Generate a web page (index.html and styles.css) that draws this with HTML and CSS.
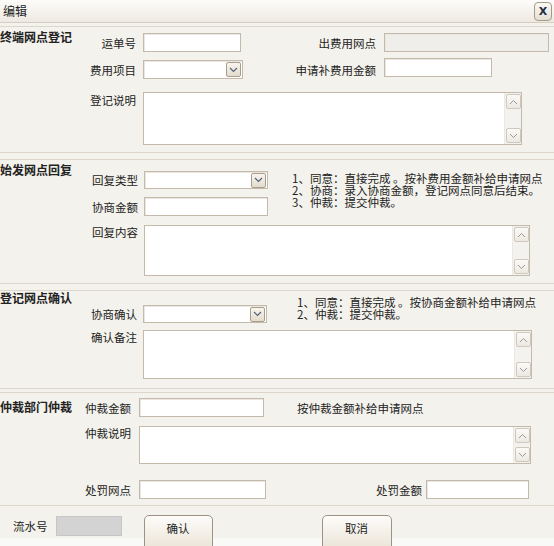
FILE: index.html
```html
<!DOCTYPE html>
<html lang="zh-CN">
<head>
<meta charset="utf-8">
<title>编辑</title>
<link rel="stylesheet" href="styles.css">
</head>
<body>
<div class="dlg">
  <div class="titlebar">
    <span class="ttl">编辑</span>
    <span class="close">X</span>
  </div>

  <section class="sec s1">
    <div class="sec-title">终端网点登记</div>
    <div class="sec-body">
      <div class="row">
        <span class="lbl l1">运单号</span><span class="inp w98"></span>
        <span class="lbl l1r">出费用网点</span><span class="inp dis w165"></span>
      </div>
      <div class="row mt8">
        <span class="lbl l1">费用项目</span>
        <span class="inp sel w100"><span class="dd"><svg width="9" height="6" viewBox="0 0 9 6"><path d="M1 1 L4.5 4.5 L8 1" fill="none" stroke="#56627c" stroke-width="1.2"/></svg></span></span>
        <span class="lbl l1r2">申请补费用金额</span><span class="inp w108 up"></span>
      </div>
      <div class="row top mt13">
        <span class="lbl l1 pt1">登记说明</span>
        <span class="ta w379 h53"><span class="sb"><span class="sbb"><svg width="9" height="6" viewBox="0 0 9 6"><path d="M1 5 L4.5 1.5 L8 5" fill="none" stroke="#9a9a9a"/></svg></span><span class="sbb"><svg width="9" height="6" viewBox="0 0 9 6"><path d="M1 1 L4.5 4.5 L8 1" fill="none" stroke="#9a9a9a"/></svg></span></span></span>
      </div>
    </div>
  </section>

  <section class="sec s2">
    <div class="sec-title">始发网点回复</div>
    <div class="sec-body">
      <div class="toprow">
        <div class="fields">
          <div class="row">
            <span class="lbl l2">回复类型</span>
            <span class="inp sel w124 h18"><span class="dd"><svg width="9" height="6" viewBox="0 0 9 6"><path d="M1 1 L4.5 4.5 L8 1" fill="none" stroke="#56627c" stroke-width="1.2"/></svg></span></span>
          </div>
          <div class="row mt8">
            <span class="lbl l2">协商金额</span><span class="inp w124"></span>
          </div>
        </div>
        <div class="notes n2">
          <div>1、同意：直接完成 。按补费用金额补给申请网点</div>
          <div>2、协商：录入协商金额，登记网点同意后结束。</div>
          <div>3、仲裁：提交仲裁。</div>
        </div>
      </div>
      <div class="row top mt9">
        <span class="lbl l2">回复内容</span>
        <span class="ta w386 h51"><span class="sb"><span class="sbb"><svg width="9" height="6" viewBox="0 0 9 6"><path d="M1 5 L4.5 1.5 L8 5" fill="none" stroke="#9a9a9a"/></svg></span><span class="sbb"><svg width="9" height="6" viewBox="0 0 9 6"><path d="M1 1 L4.5 4.5 L8 1" fill="none" stroke="#9a9a9a"/></svg></span></span></span>
      </div>
    </div>
  </section>

  <section class="sec s3">
    <div class="sec-title">登记网点确认</div>
    <div class="sec-body">
      <div class="toprow">
        <div class="row">
          <span class="lbl l3">协商确认</span>
          <span class="inp sel w124 h18"><span class="dd"><svg width="9" height="6" viewBox="0 0 9 6"><path d="M1 1 L4.5 4.5 L8 1" fill="none" stroke="#56627c" stroke-width="1.2"/></svg></span></span>
        </div>
        <div class="notes n3">
          <div>1、同意：直接完成 。按协商金额补给申请网点</div>
          <div>2、仲裁：提交仲裁。</div>
        </div>
      </div>
      <div class="row top mt7">
        <span class="lbl l3">确认备注</span>
        <span class="ta w389 h49"><span class="sb"><span class="sbb"><svg width="9" height="6" viewBox="0 0 9 6"><path d="M1 5 L4.5 1.5 L8 5" fill="none" stroke="#9a9a9a"/></svg></span><span class="sbb"><svg width="9" height="6" viewBox="0 0 9 6"><path d="M1 1 L4.5 4.5 L8 1" fill="none" stroke="#9a9a9a"/></svg></span></span></span>
      </div>
    </div>
  </section>

  <section class="sec s4">
    <div class="sec-title">仲裁部门仲裁</div>
    <div class="sec-body">
      <div class="row">
        <span class="lbl l4">仲裁金额</span><span class="inp w125"></span>
        <span class="hint">按仲裁金额补给申请网点</span>
      </div>
      <div class="row top mt9">
        <span class="lbl l4">仲裁说明</span>
        <span class="ta w392 h38"><span class="sb"><span class="sbb"><svg width="9" height="6" viewBox="0 0 9 6"><path d="M1 5 L4.5 1.5 L8 5" fill="none" stroke="#9a9a9a"/></svg></span><span class="sbb"><svg width="9" height="6" viewBox="0 0 9 6"><path d="M1 1 L4.5 4.5 L8 1" fill="none" stroke="#9a9a9a"/></svg></span></span></span>
      </div>
      <div class="row mt16">
        <span class="lbl l4">处罚网点</span><span class="inp w127"></span>
        <span class="lbl l4r">处罚金额</span><span class="inp w103"></span>
      </div>
    </div>
  </section>

  <div class="footer">
    <span class="flbl">流水号</span>
    <span class="serial"></span>
    <span class="btn b1">确认</span>
    <span class="btn b2">取消</span>
  </div>
</div>
</body>
</html>
```

FILE: styles.css
```css
* { box-sizing: border-box; }
html, body { margin: 0; padding: 0; }
body {
  width: 554px;
  height: 546px;
  overflow: hidden;
  background: #f9f9f8;
  font-family: "Noto Sans CJK SC", "Noto Sans", sans-serif;
  font-size: 11.5px;
  color: #222;
}
.dlg {
  background: #f4f2ec;
  height: 538px;
}
.titlebar {
  height: 23px;
  display: flex;
  align-items: center;
  justify-content: space-between;
  padding: 0 2px 0 3px;
  background: linear-gradient(#fdfcfa, #eeeae2);
  border-bottom: 1px solid #d5cec2;
}
.ttl { font-size: 12px; line-height: 14px; }
.close {
  width: 18px;
  height: 19px;
  border: 1px solid #a39a8a;
  border-radius: 4px;
  background: linear-gradient(#fbf9f4, #e6e0d3);
  display: flex;
  align-items: center;
  justify-content: center;
  font-family: "DejaVu Sans", sans-serif;
  font-weight: bold;
  font-size: 11px;
  color: #1f2d4a;
}

.sec {
  display: flex;
  border-top: 1px solid #ddd6ca;
  border-bottom: 1px solid #ddd6ca;
}
.s1 { margin-top: 3px; }
.s2 { margin-top: 6px; }
.s3 { margin-top: 6px; }
.s4 { margin-top: 3px; }

.sec-title {
  width: 76px;
  flex: none;
  font-weight: bold;
  font-size: 12px;
  line-height: 14px;
  white-space: nowrap;
}
.s1 .sec-title { padding-top: 3px; }
.s2 .sec-title { padding-top: 3px; }
.s3 .sec-title { padding-top: 0; }
.s4 .sec-title { padding-top: 7px; }

.sec-body { flex: 1; display: flex; flex-direction: column; }
.s1 .sec-body { padding: 6px 0 7px; }
.s2 .sec-body { padding: 11px 0 7px; }
.s3 .sec-body { padding: 14px 0 9px; }
.s4 .sec-body { padding: 5px 0 6px; }

.row { display: flex; align-items: center; }
.row.top { align-items: flex-start; }
.mt7 { margin-top: 7px; }
.mt8 { margin-top: 8px; }
.mt9 { margin-top: 9px; }
.mt13 { margin-top: 13px; }
.mt16 { margin-top: 16px; }

.lbl {
  flex: none;
  text-align: right;
  line-height: 14px;
  white-space: nowrap;
}
.pt1 { padding-top: 1px; }
.l1 { width: 67px; padding-right: 7px; }
.l1r { width: 143px; padding-right: 8px; }
.l1r2 { width: 141px; padding-right: 8px; }
.l2 { width: 68px; padding-right: 6px; }
.l3 { width: 67px; padding-right: 6px; }
.l4 { width: 63px; padding-right: 8px; }
.l4r { width: 160px; padding-right: 4px; }

.inp {
  flex: none;
  display: flex;
  height: 19px;
  background: #fff;
  border: 1px solid #c3baab;
  box-shadow: inset 1px 1px 0 #ebe7e0;
}
.inp.dis { background: #f0eeea; }
.h18 { height: 18px; }
.up { margin-top: -4px; }
.w98 { width: 98px; }
.w100 { width: 100px; }
.w103 { width: 103px; }
.w108 { width: 108px; }
.w124 { width: 124px; }
.w125 { width: 125px; }
.w127 { width: 127px; }
.w165 { width: 165px; }

.sel { justify-content: flex-end; align-items: center; padding-right: 1px; }
.dd {
  width: 15px;
  height: 15px;
  border: 1px solid #a99e8b;
  border-radius: 2px;
  background: linear-gradient(#f8f5ee, #e3dccd);
  display: flex;
  align-items: center;
  justify-content: center;
}

.ta {
  flex: none;
  display: flex;
  justify-content: flex-end;
  background: #fff;
  border: 1px solid #c3baab;
}
.w379 { width: 379px; }
.w386 { width: 386px; }
.w389 { width: 389px; }
.w392 { width: 392px; }
.h53 { height: 53px; }
.h51 { height: 51px; }
.h49 { height: 49px; }
.h38 { height: 38px; }
.sb {
  width: 17px;
  display: flex;
  flex-direction: column;
  justify-content: space-between;
  padding: 1px 0 1px 1px;
  background: #f3f2ef;
  border-left: 1px solid #ebe8e2;
}
.sbb {
  width: 15px;
  height: 15px;
  border: 1px solid #cfc8bd;
  border-radius: 2px;
  background: linear-gradient(#fbfaf8, #ece8e1);
  display: flex;
  align-items: center;
  justify-content: center;
}

.toprow { display: flex; align-items: flex-start; }
.fields { display: flex; flex-direction: column; }
.notes { line-height: 12px; white-space: nowrap; }
.n2 { margin-left: 24px; margin-top: 1px; }
.n3 { margin-left: 30px; margin-top: -9px; }
.hint { margin-left: 33px; line-height: 14px; }

.footer {
  display: flex;
  align-items: flex-start;
  padding-top: 9px;
  height: 32px;
}
.flbl { margin-left: 13px; margin-top: 4px; line-height: 14px; }
.serial {
  margin-left: 8px;
  margin-top: 1px;
  width: 66px;
  height: 20px;
  background: #d3d3d3;
  border: 1px solid #c6c6c6;
}
.btn {
  flex: none;
  height: 34px;
  padding-top: 5px;
  line-height: 14px;
  text-align: center;
  border: 1px solid #9d9385;
  border-radius: 5px 5px 0 0;
  background: linear-gradient(#fdfcfa, #ebe5d8);
}
.b1 { margin-left: 22px; width: 69px; }
.b2 { margin-left: 109px; width: 70px; }
```
